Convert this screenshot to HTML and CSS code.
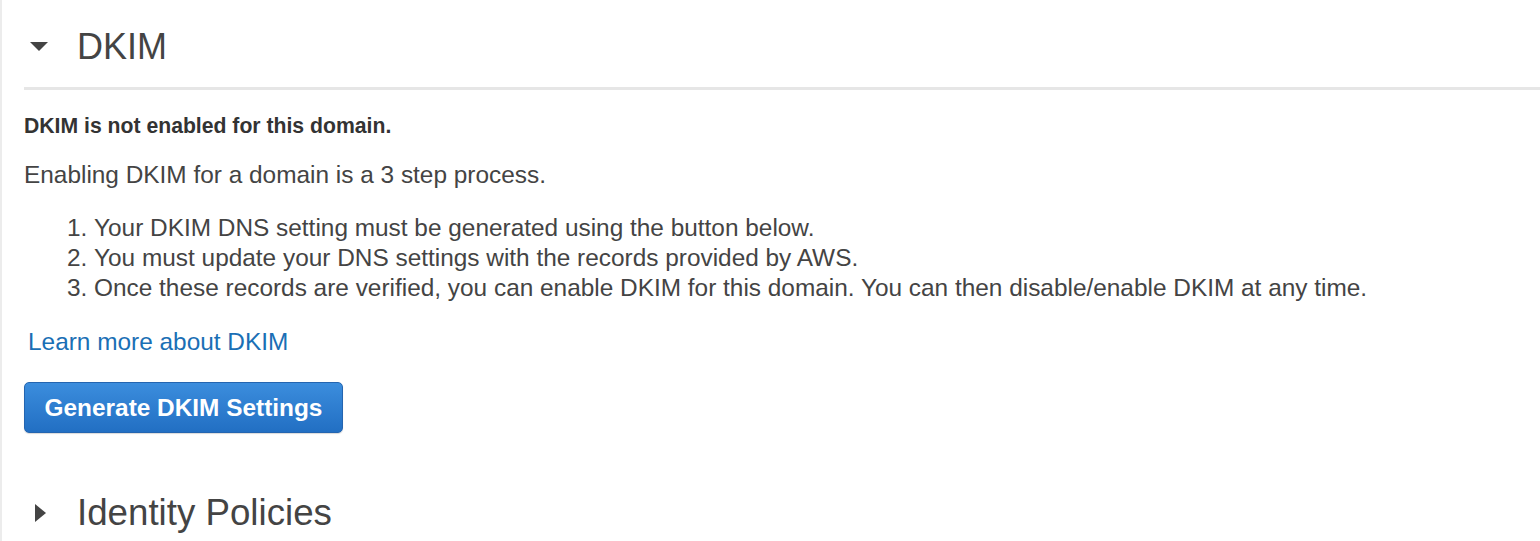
FILE: index.html
```html
<!DOCTYPE html>
<html>
<head>
  <title>DKIM</title>
  <link rel="stylesheet" href="styles.css">
</head>
<body>
  <div class="panel">
    <div class="section-head">
      <span class="caret caret-down"></span>
      <h2>DKIM</h2>
    </div>
    <div class="section-body">
      <p class="status">DKIM is not enabled for this domain.</p>
      <p class="intro">Enabling DKIM for a domain is a 3 step process.</p>
      <ol class="steps">
        <li>Your DKIM DNS setting must be generated using the button below.</li>
        <li>You must update your DNS settings with the records provided by AWS.</li>
        <li>Once these records are verified, you can enable DKIM for this domain. You can then disable/enable DKIM at any time.</li>
      </ol>
      <a class="learn" href="#">Learn more about DKIM</a>
      <button class="btn-primary" type="button">Generate DKIM Settings</button>
    </div>
    <div class="section-head collapsed">
      <span class="caret caret-right"></span>
      <h2>Identity Policies</h2>
    </div>
  </div>
</body>
</html>
```

FILE: styles.css
```css
body {
    margin: 0;
    background: #fff;
    font-family: "Liberation Sans", Arial, sans-serif;
    color: #444;
}

.panel {
    border-left: 2px solid #ececec;
    height: 541px;
    box-sizing: border-box;
    padding-left: 22px;
    overflow: hidden;
}

.section-head {
    display: flex;
    align-items: center;
    height: 90px;
    border-bottom: 3px solid #e6e6e6;
    box-sizing: border-box;
    padding-top: 6px;
}

.section-head h2 {
    margin: 0 0 0 29px;
    font-size: 36px;
    line-height: 42px;
    font-weight: normal;
    color: #444;
}

.section-head.collapsed {
    border-bottom: none;
    height: 42px;
    padding-top: 0;
    margin-top: 59px;
}

.section-head.collapsed h2 {
    font-size: 36.7px;
}

.caret {
    display: inline-block;
    width: 0;
    height: 0;
}

.caret-down {
    margin-left: 6px;
    border-left: 9px solid transparent;
    border-right: 9px solid transparent;
    border-top: 9px solid #444;
}

.caret-right {
    margin-left: 11px;
    margin-right: 2px;
    border-top: 9px solid transparent;
    border-bottom: 9px solid transparent;
    border-left: 11px solid #444;
}

.section-body {
    font-size: 24.4px;
    line-height: 28px;
}

.status {
    font-size: 21.2px;
    line-height: 24px;
    font-weight: bold;
    color: #333;
    margin: 24px 0 0;
}

.intro {
    margin: 23px 0 0;
}

.steps {
    margin: 24px 0 0;
    padding-left: 70px;
    line-height: 30px;
}

.learn {
    display: block;
    margin: 25px 0 0 4px;
    color: #1a6fb5;
    text-decoration: none;
}

.btn-primary {
    display: block;
    margin-top: 26px;
    width: 319px;
    height: 51px;
    border: 1px solid #2465b0;
    border-radius: 5px;
    background: linear-gradient(#3b8ddd, #226fc3);
    color: #fff;
    font-family: inherit;
    font-size: 24.4px;
    font-weight: bold;
    cursor: pointer;
    box-shadow: 0 1px 1px rgba(0, 0, 0, 0.15);
}
```
